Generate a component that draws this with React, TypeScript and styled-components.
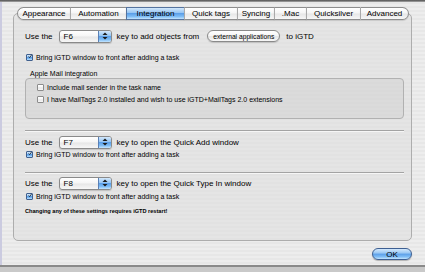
import React from "react";
import styled, { createGlobalStyle } from "styled-components";

const GlobalStyle = createGlobalStyle`
  html, body {
    margin: 0;
    padding: 0;
    background: #e9e9e9;
  }
  body {
    font-family: "Liberation Sans", Arial, sans-serif;
    color: #000;
  }
`;

const aqua = `linear-gradient(
  to bottom,
  #d3e8fc 0%,
  #97c6f3 42%,
  #5c9fe8 50%,
  #7fbdf5 78%,
  #c4e5ff 100%
)`;

const glass = `linear-gradient(
  to bottom,
  #ffffff 0%,
  #f5f5f5 48%,
  #e6e6e6 52%,
  #f7f7f7 100%
)`;

const Window = styled.div`
  width: 425px;
  height: 272px;
  overflow: hidden;
  display: flex;
  flex-direction: column;
  background: repeating-linear-gradient(
    to bottom,
    #ededed 0px,
    #ededed 2px,
    #e7e7e7 2px,
    #e7e7e7 4px
  );
`;

const TopShade = styled.div`
  height: 2px;
  flex-shrink: 0;
  background: linear-gradient(to bottom, #4c4c4c, #a9a9a9);
`;

const Sheet = styled.div`
  flex: 1;
  display: flex;
  flex-direction: column;
  padding: 0 13px 0 11px;
  border-left: 2px solid #cbcbe0;
  box-sizing: border-box;
`;

const TabBar = styled.div`
  position: relative;
  z-index: 1;
  display: flex;
  margin: 5px 0 0 4px;
  height: 13px;
`;

const Tab = styled.div<{ $w: number; $active?: boolean; $first?: boolean; $last?: boolean }>`
  width: ${(p) => p.$w}px;
  height: 13px;
  box-sizing: border-box;
  display: flex;
  align-items: center;
  justify-content: center;
  font-size: 8px;
  line-height: 1;
  border-top: 1px solid ${(p) => (p.$active ? "#55739e" : "#8d8d8d")};
  border-bottom: 1px solid ${(p) => (p.$active ? "#55739e" : "#8d8d8d")};
  border-left: 1px solid ${(p) => (p.$active ? "#55739e" : p.$first ? "#8d8d8d" : "#a9a9a9")};
  border-right: ${(p) => (p.$last ? "1px solid #8d8d8d" : "none")};
  border-radius: ${(p) => (p.$first ? "7px 0 0 7px" : p.$last ? "0 7px 7px 0" : "0")};
  background: ${(p) => (p.$active ? aqua : glass)};
  box-shadow: 0 1px 1px rgba(0, 0, 0, 0.12);
`;

const TabBox = styled.div`
  margin-top: -7px;
  height: 228px;
  box-sizing: border-box;
  border: 1px solid #adadad;
  border-radius: 5px;
  background: rgba(222, 222, 222, 0.55);
  padding: 15px 7px 0 11px;
  display: flex;
  flex-direction: column;
`;

const Row = styled.div<{ $mt?: number }>`
  display: flex;
  align-items: center;
  height: 14px;
  margin-top: ${(p) => p.$mt ?? 0}px;
  font-size: 8px;
  white-space: nowrap;
`;

const Label = styled.span<{ $ml?: number }>`
  margin-left: ${(p) => p.$ml ?? 0}px;
`;

const Popup = styled.div`
  display: flex;
  align-items: center;
  width: 53px;
  height: 13px;
  margin-left: 6px;
  box-sizing: border-box;
  border: 1px solid #8a8a8a;
  border-radius: 3px;
  background: ${glass};
  overflow: hidden;
  font-size: 8px;
  box-shadow: 0 1px 1px rgba(0, 0, 0, 0.15);
`;

const PopupText = styled.span`
  padding-left: 4px;
  flex: 1;
`;

const PopupCap = styled.div`
  width: 12px;
  height: 100%;
  display: flex;
  align-items: center;
  justify-content: center;
  border-left: 1px solid #5a80b6;
  background: ${aqua};
`;

const Pill = styled.div`
  display: flex;
  align-items: center;
  height: 10px;
  margin-left: 8px;
  padding: 0 5px;
  border: 1px solid #8a8a8a;
  border-radius: 6px;
  background: ${glass};
  font-size: 6.7px;
  box-shadow: 0 1px 1px rgba(0, 0, 0, 0.15);
`;

const CheckRow = styled.div<{ $mt?: number; $ml?: number }>`
  display: flex;
  align-items: center;
  height: 10px;
  margin-top: ${(p) => p.$mt ?? 0}px;
  margin-left: ${(p) => p.$ml ?? 1}px;
  font-size: 7px;
  white-space: nowrap;
  gap: 3px;
`;

const Box = styled.div<{ $on?: boolean }>`
  width: 7px;
  height: 7px;
  box-sizing: border-box;
  border: 1px solid ${(p) => (p.$on ? "#40608e" : "#8c8c8c")};
  border-radius: 1px;
  background: ${(p) => (p.$on ? aqua : glass)};
  display: flex;
  align-items: center;
  justify-content: center;
  flex-shrink: 0;
`;

const GroupLabel = styled.div`
  margin: 8px 0 0 5px;
  height: 8px;
  line-height: 8px;
  font-size: 7px;
`;

const Group = styled.div`
  height: 41px;
  box-sizing: border-box;
  border: 1px solid #b1b1b1;
  border-radius: 4px;
  background: rgba(200, 200, 200, 0.35);
  padding: 3px 0 0 11px;
  display: flex;
  flex-direction: column;
`;

const Separator = styled.div<{ $mt: number }>`
  margin-top: ${(p) => p.$mt}px;
  height: 1px;
  background: #a3a3a3;
  border-bottom: 1px solid #f6f6f6;
`;

const Note = styled.div`
  margin-top: 6px;
  height: 8px;
  line-height: 8px;
  font-size: 5.6px;
  font-weight: bold;
`;

const Footer = styled.div`
  display: flex;
  justify-content: flex-end;
  margin-top: 7px;
  padding-right: 0;
`;

const OkButton = styled.div`
  width: 40px;
  height: 12px;
  box-sizing: border-box;
  border: 1px solid #3d5f92;
  border-radius: 6px;
  background: ${aqua};
  display: flex;
  align-items: center;
  justify-content: center;
  font-size: 8px;
  box-shadow: 0 1px 1px rgba(0, 0, 0, 0.25);
`;

const BottomEdge = styled.div`
  margin-top: auto;
  height: 5px;
  flex-shrink: 0;
  border-top: 2px solid #8a8a8a;
  background: #c9c9c9;
`;

const Arrows = () => (
  <svg width="6" height="8" viewBox="0 0 6 8">
    <path d="M3 0.5 L5.5 3 L0.5 3 Z" fill="#1a1a1a" />
    <path d="M3 7.5 L5.5 5 L0.5 5 Z" fill="#1a1a1a" />
  </svg>
);

const Tick = () => (
  <svg width="7" height="7" viewBox="0 0 7 7" style={{ marginTop: -2, marginLeft: 1 }}>
    <path d="M1 3.5 L2.8 5.6 L6.6 0.4" stroke="#111" strokeWidth="1.3" fill="none" />
  </svg>
);

const Check = ({ on, text, mt, ml }: { on?: boolean; text: string; mt?: number; ml?: number }) => (
  <CheckRow $mt={mt} $ml={ml}>
    <Box $on={on}>{on && <Tick />}</Box>
    <span>{text}</span>
  </CheckRow>
);

const KeyPopup = ({ value }: { value: string }) => (
  <Popup>
    <PopupText>{value}</PopupText>
    <PopupCap>
      <Arrows />
    </PopupCap>
  </Popup>
);

const tabs = [
  { label: "Appearance", w: 53 },
  { label: "Automation", w: 56 },
  { label: "Integration", w: 58 },
  { label: "Quick tags", w: 53 },
  { label: "Syncing", w: 37 },
  { label: ".Mac", w: 32 },
  { label: "Quicksilver", w: 54 },
  { label: "Advanced", w: 49 },
];

const bringText = "Bring iGTD window to front after adding a task";

export default function App() {
  return (
    <Window>
      <GlobalStyle />
      <TopShade />
      <Sheet>
        <TabBar>
          {tabs.map((t, i) => (
            <Tab
              key={t.label}
              $w={t.w}
              $active={t.label === "Integration"}
              $first={i === 0}
              $last={i === tabs.length - 1}
            >
              {t.label}
            </Tab>
          ))}
        </TabBar>
        <TabBox>
          <Row>
            <Label>Use the</Label>
            <KeyPopup value="F6" />
            <Label $ml={5}>key to add objects from</Label>
            <Pill>external applications</Pill>
            <Label $ml={6}>to iGTD</Label>
          </Row>
          <Check on text={bringText} mt={9} />

          <GroupLabel>Apple Mail integration</GroupLabel>
          <Group>
            <Check text="Include mail sender in the task name" ml={0} />
            <Check
              text="I have MailTags 2.0 installed and wish to use iGTD+MailTags 2.0 extensions"
              mt={2}
              ml={0}
            />
          </Group>

          <Separator $mt={11} />
          <Row $mt={3}>
            <Label>Use the</Label>
            <KeyPopup value="F7" />
            <Label $ml={5}>key to open the Quick Add window</Label>
          </Row>
          <Check on text={bringText} />

          <Separator $mt={13} />
          <Row $mt={2}>
            <Label>Use the</Label>
            <KeyPopup value="F8" />
            <Label $ml={5}>key to open the Quick Type In window</Label>
          </Row>
          <Check on text={bringText} mt={1} />

          <Note>Changing any of these settings requires iGTD restart!</Note>
        </TabBox>
        <Footer>
          <OkButton>OK</OkButton>
        </Footer>
      </Sheet>
      <BottomEdge />
    </Window>
  );
}
